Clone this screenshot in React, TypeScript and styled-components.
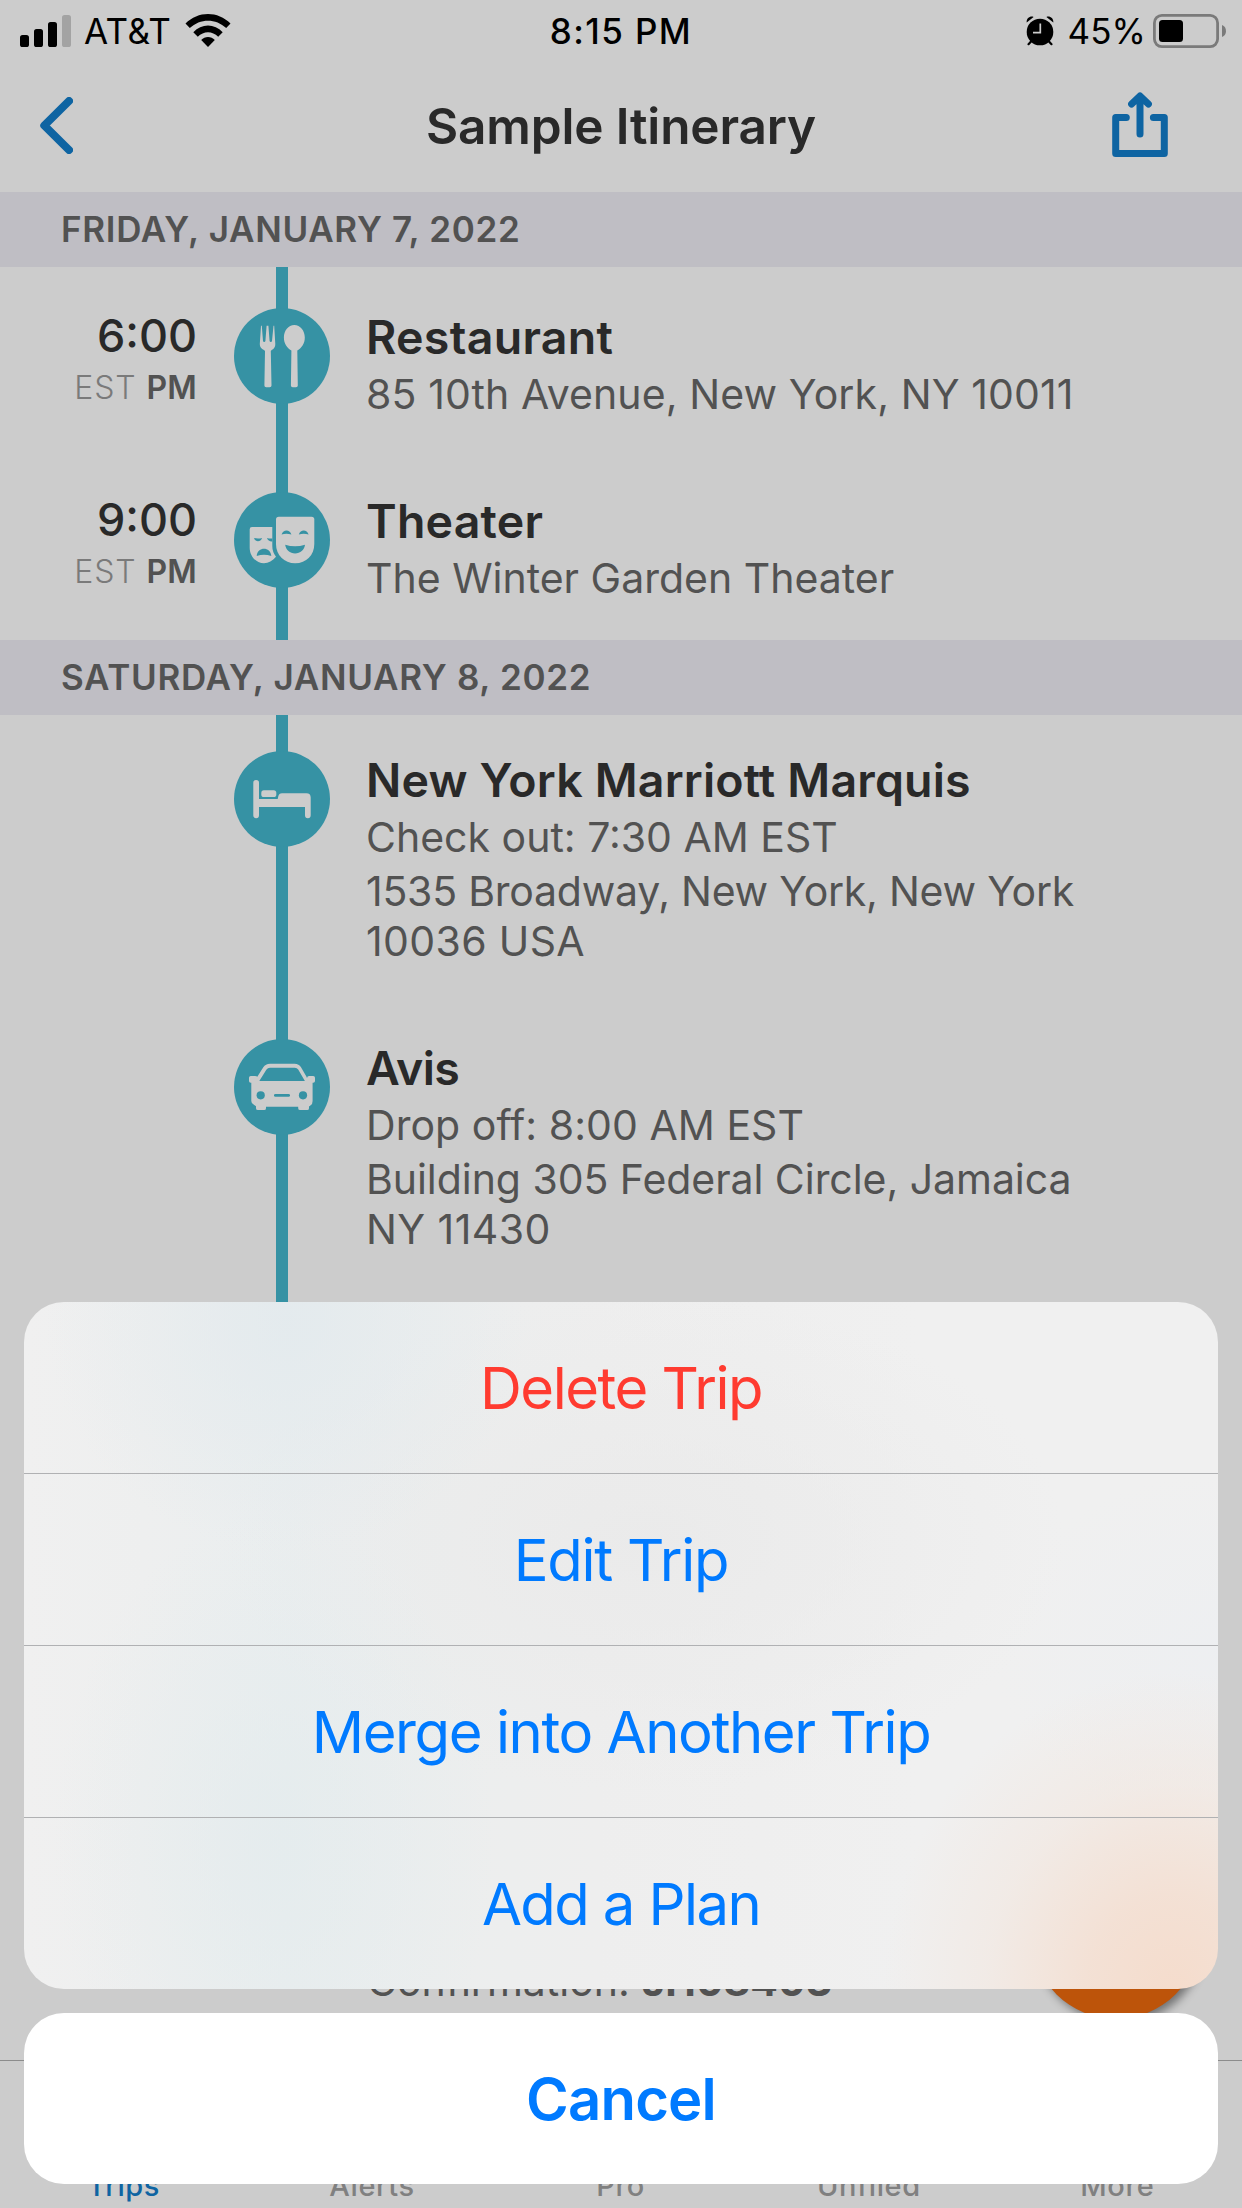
import React from "react";
import styled, { createGlobalStyle } from "styled-components";

const GlobalStyle = createGlobalStyle`
  * { box-sizing: border-box; }
  body { margin: 0; background: #cccccc; }
`;

const Screen = styled.div`
  position: relative;
  display: flex;
  flex-direction: column;
  width: 1242px;
  height: 2208px;
  overflow: hidden;
  background: #cccccc;
  font-family: Inter, "Liberation Sans", sans-serif;
  white-space: nowrap;
`;

const StatusBar = styled.header`
  display: grid;
  grid-template-columns: 1fr auto 1fr;
  align-items: center;
  height: 62px;
  padding: 0 16px 0 20px;
  color: #000;
  font-size: 35px;
  line-height: 62px;
`;

const StatusGroup = styled.div<{ $end?: boolean }>`
  display: flex;
  align-items: center;
  justify-content: ${(p) => (p.$end ? "flex-end" : "flex-start")};
  height: 62px;
`;

const Carrier = styled.span`
  margin: 0 14px 0 13px;
  letter-spacing: 0.4px;
`;

const Clock = styled.span`
  margin-right: 4px;
  font-weight: 500;
  letter-spacing: 1.4px;
`;

const BatteryLevel = styled.span`
  margin: 0 7px 0 13.5px;
  letter-spacing: 0.1px;
`;

const NavBar = styled.nav`
  display: grid;
  grid-template-columns: 1fr auto 1fr;
  align-items: center;
  height: 130px;
  padding: 0 74px 2px 40px;
  color: #0e64a2;
`;

const NavTitle = styled.h1`
  margin: 0 0 0 34px;
  color: #292929;
  font-size: 49.5px;
  font-weight: 600;
  line-height: 60px;
  letter-spacing: -0.15px;
`;

const NavAction = styled.div<{ $end?: boolean }>`
  display: flex;
  justify-content: ${(p) => (p.$end ? "flex-end" : "flex-start")};
  margin-bottom: ${(p) => (p.$end ? 3 : 1)}px;
`;

const DayHeader = styled.h2`
  flex: none;
  height: 75px;
  margin: 0;
  padding-left: 61px;
  background: #bfbec4;
  color: #525252;
  font-size: 35px;
  font-weight: 600;
  line-height: 75px;
  letter-spacing: 0.7px;
`;

const DayPlans = styled.section<{ $top: number; $bottom: number }>`
  flex: none;
  padding: ${(p) => p.$top}px 0 ${(p) => p.$bottom}px;
  background: linear-gradient(#3692a4, #3692a4) 276px 0 / 12px 100% no-repeat;
`;

const PlanRow = styled.article<{ $height: number }>`
  display: grid;
  grid-template-columns: 197px 96px 1fr;
  column-gap: 37px;
  align-items: start;
  height: ${(p) => p.$height}px;
  padding-top: 36px;
`;

const TimeColumn = styled.div`
  display: flex;
  flex-direction: column;
  align-items: flex-end;
  padding-top: 1px;
`;

const Time = styled.div`
  color: #292929;
  font-size: 45px;
  font-weight: 500;
  line-height: 54px;
`;

const Zone = styled.div`
  margin-top: 5px;
  color: #7a7a7a;
  font-size: 32px;
  font-weight: 300;
  line-height: 40px;
  letter-spacing: 0.9px;

  b {
    color: #525252;
    font-weight: 600;
    letter-spacing: 0.2px;
  }
`;

const Badge = styled.div`
  width: 96px;
  height: 96px;
  border-radius: 50%;
  background: #3692a4;
  color: #cccccc;
`;

const PlanText = styled.div`
  margin-left: -1px;
  padding-top: 1px;
`;

const PlanTitle = styled.h3<{ $spacing?: number }>`
  margin: 0;
  color: #292929;
  font-size: 46.5px;
  font-weight: 600;
  line-height: 56px;
  letter-spacing: ${(p) => p.$spacing ?? 0}px;
`;

const PlanDetail = styled.p<{ $tight?: boolean; $spacing?: number }>`
  margin: ${(p) => (p.$tight ? 0 : 4)}px 0 0;
  color: #525252;
  font-size: 41px;
  line-height: 50px;
  letter-spacing: ${(p) => p.$spacing ?? 0}px;
`;

const TrailingPlan = styled.section`
  flex: 1;
  display: flex;
  align-items: flex-end;
  padding: 0 0 54px 367px;
`;

const TabBar = styled.footer`
  flex: none;
  display: grid;
  grid-template-columns: repeat(5, 1fr);
  align-items: end;
  height: 148px;
  padding-bottom: 4px;
  border-top: 1px solid #8c8c8c;
`;

const Tab = styled.span<{ $active?: boolean }>`
  padding-right: 1px;
  color: ${(p) => (p.$active ? "#0e64a2" : "#808080")};
  font-size: 29px;
  font-weight: 500;
  line-height: 36px;
  text-align: center;
  letter-spacing: 0.6px;
`;

const AddButton = styled.div`
  position: absolute;
  left: 1032px;
  top: 1851px;
  width: 168px;
  height: 168px;
  border-radius: 50%;
  background: #bd540a;
  box-shadow: 4px 4px 10px rgba(0, 0, 0, 0.45);
`;

const ActionSheet = styled.div`
  position: absolute;
  left: 24px;
  right: 24px;
  bottom: 24px;
  display: flex;
  flex-direction: column;
  gap: 24px;
`;

const ActionGroup = styled.div`
  overflow: hidden;
  border-radius: 40px;
  background:
    radial-gradient(ellipse 290px 320px at 1150px 690px, #f5dccc 0%, rgba(244, 222, 208, 0.85) 30%, rgba(243, 228, 218, 0.45) 65%, rgba(241, 238, 236, 0) 100%),
    radial-gradient(ellipse 230px 180px at 1200px 350px, rgba(235, 238, 242, 0.55), rgba(236, 238, 242, 0)),
    radial-gradient(ellipse 240px 230px at 262px 20px, rgba(225, 233, 237, 0.7), rgba(230, 236, 238, 0)),
    radial-gradient(ellipse 220px 330px at 250px 540px, rgba(226, 235, 237, 0.65), rgba(230, 236, 238, 0)),
    radial-gradient(ellipse 420px 250px at 620px 240px, rgba(234, 234, 234, 0.9), rgba(236, 236, 236, 0)),
    linear-gradient(90deg, #f0f0f0 0%, #eeefef 10%, #eaeeef 22%, #eceeee 34%, #eeeeee 48%, #f0f0f0 75%, #f0f0f0 100%);
`;

const Action = styled.div<{ $danger?: boolean; $spacing: number }>`
  height: 171px;
  color: ${(p) => (p.$danger ? "#ff3b30" : "#007aff")};
  font-size: 58px;
  line-height: 172px;
  text-align: center;
  letter-spacing: ${(p) => p.$spacing}px;

  & + & {
    height: 172px;
    border-top: 1px solid #b0b1b3;
  }
`;

const CancelAction = styled.div`
  height: 171px;
  border-radius: 40px;
  background: #fff;
  color: #007aff;
  font-size: 58px;
  font-weight: 600;
  line-height: 172px;
  text-align: center;
  letter-spacing: -0.8px;
`;

const SignalIcon = () => (
  <svg width="51" height="33" viewBox="0 0 51 33">
    <rect x="0" y="20" width="9" height="12" rx="2.6" />
    <rect x="14" y="14" width="9" height="18" rx="2.6" />
    <rect x="28" y="7" width="9" height="25" rx="2.6" />
    <rect x="42" y="0" width="9" height="32" rx="2.6" fill="#a3a3a3" />
  </svg>
);

const WifiIcon = () => (
  <svg width="46" height="34" viewBox="0 0 46 34">
    <path d="M.5 9.6C13-3.2 33-3.2 45.500 9.600l-4.300 4.500C31 4.200 15 4.200 4.800 14.100z" />
    <path d="M8.300 18.200c8.300-9 21.100-9 29.400 0l-4.500 4.500c-5.900-6-14.500-6-20.400 0z" />
    <path d="M16.200 26c3.600-4 10-4 13.600 0L23 33z" />
  </svg>
);

const AlarmIcon = () => (
  <svg width="28" height="30" viewBox="0 0 28 30">
    <path d="M.7 6.500C.2 3 3.500-.4 7.600.9zM27.300 6.500C27.800 3 24.500-.4 20.400.9z" />
    <circle cx="14" cy="16" r="13.300" />
    <path d="M5.500 25l-3 3.200M22.500 25l3 3.200" stroke="#000" strokeWidth="2.200" strokeLinecap="round" />
    <path d="M14.300 7.500v9.200H7" fill="none" stroke="#cccccc" strokeWidth="1.700" />
  </svg>
);

const BatteryIcon = () => (
  <svg width="73" height="34" viewBox="0 0 73 34">
    <rect x="1.400" y="1.400" width="63.200" height="31.200" rx="7.500" fill="none" stroke="#7a7a7a" strokeWidth="2.800" />
    <rect x="6" y="6" width="24" height="22" rx="3.500" />
    <path d="M69 11c5.300 1.500 5.300 10.500 0 12z" fill="#7a7a7a" />
  </svg>
);

const BackIcon = () => (
  <svg width="33" height="57" viewBox="0 0 33 57" fill="none" stroke="currentColor" strokeWidth="8" strokeLinecap="round" strokeLinejoin="round">
    <path d="M29 4L4.300 28.500 29 53" />
  </svg>
);

const ShareIcon = () => (
  <svg width="56" height="65" viewBox="0 0 56 65" fill="none" stroke="currentColor" strokeWidth="7" strokeLinecap="round" strokeLinejoin="round">
    <path d="M14.300 25.500H3.700v36h48.600v-36H41.400" />
    <path d="M28 42V4.500M19.600 12L28 4l8.400 8" />
  </svg>
);

const RestaurantIcon = () => (
  <svg width="96" height="96" viewBox="0 0 96 96" fill="currentColor">
    <path d="M27 17.700h.8L29 33q.2 1 1.200 1t1.200-1L32.600 17.700h1.800L35.600 33q.2 1 1.200 1T38 33L39.500 17.700h.7L41.300 36q.1 4-3.600 6L36.800 43l.7 34.500q0 1.700-1.800 1.700h-3.500q-1.800 0-1.800-1.700L31 43l-1-1q-4.300-2-4.200-6z" />
    <path d="M60.300 17c6 0 10.500 5.700 10.500 12.500 0 6-3 10.500-7.500 12.900l.5 35.100q0 1.700-1.800 1.700h-3.300q-1.800 0-1.800-1.700l.5-35.100c-4.500-2.400-7.500-6.900-7.500-12.900C49.900 22.700 54.300 17 60.300 17z" />
  </svg>
);

const TheaterIcon = () => (
  <svg width="96" height="96" viewBox="0 0 96 96" fill="currentColor">
    <path d="M18 35h20.300v19q0 6 3.700 10.800C38.500 69 34.500 71.300 30 71.300 22 71.300 15.700 64 15.700 56V37.300Q15.700 35 18 35z" />
    <path d="M44.800 24.700h32.700q2.800 0 2.800 2.800V52c0 11-8 19.300-19.100 19.300S42 63 42 52V27.500q0-2.800 2.800-2.800z" />
    <g fill="#3692a4">
      <path d="M47.600 42.400c1.600-5.300 8.200-5.300 9.800 0q-5-1.300-9.800 0zM64.800 42.400c1.600-5.300 8.200-5.300 9.800 0q-5-1.300-9.800 0z" />
      <path d="M51.200 52.700q9.900 3 19.800 0c-.5 5.200-4.800 8.700-9.900 8.700s-9.400-3.500-9.900-8.700z" />
      <path d="M19.900 46q4 1 8.200 0c-1.600 4.400-6.600 4.400-8.200 0zM33 46q3 .8 5.300.4v3c-2.300.3-4.600-1-5.300-3.400z" />
      <path d="M22.700 64c.8-9.600 13.800-9.600 14.600 0q-7.300-2.600-14.600 0z" />
    </g>
  </svg>
);

const BedIcon = () => (
  <svg width="96" height="96" viewBox="0 0 96 96" fill="currentColor">
    <path d="M22.200 29a2.800 2.800 0 0 1 2.800 2.800V48h18.700l.6-2.800q.6-2.900 3.700-2.900h24.400q4.300 0 4.300 4.300v17.700a2.850 2.850 0 0 1-5.700 0V56H25v8.300a2.850 2.850 0 0 1-5.700 0V31.800A2.800 2.800 0 0 1 22.200 29z" />
    <rect x="27.300" y="39.300" width="15" height="6.700" rx="2.600" />
  </svg>
);

const CarIcon = () => (
  <svg width="96" height="96" viewBox="0 0 96 96" fill="currentColor">
    <path
      fillRule="evenodd"
      d="M36 24.700h24.500q4.500 0 6.500 3.500l5.500 9.500h0L73 39q.3-2 2-2h4.200q1.800 0 1.800 1.800v3.200q0 1.800-1.800 1.800h-.6V62q0 3-1.900 4.200l-1.700 1.300v1.700q0 1.900-1.900 1.900h-7q-1.900 0-1.900-1.900v-1.500H32v1.500q0 1.900-1.900 1.900h-6.200q-1.900 0-1.900-1.900v-2l-2.400-1.700Q17.300 64 17.300 62V43.800h-.6q-1.700 0-1.700-1.800v-3.200Q15 37 16.800 37H21q1.800 0 2.300.8l6-9.600q2.200-3.500 6.700-3.500zM36 28.700q-2.300 0-3.500 1.800L25.300 42h45.600l-6.700-11.500q-1.200-1.800-3.400-1.800z"
    />
    <g fill="#3692a4">
      <circle cx="26.700" cy="56.300" r="4.100" />
      <circle cx="69" cy="56.300" r="4.100" />
      <rect x="40" y="54.900" width="16" height="2.900" rx="1.400" />
    </g>
  </svg>
);

interface Line {
  text: string;
  spacing?: number;
  tight?: boolean;
}

interface Plan {
  title: string;
  titleSpacing?: number;
  time?: string;
  icon: React.ReactNode;
  lines: Line[];
  height: number;
}

const friday: Plan[] = [
  {
    title: "Restaurant",
    titleSpacing: 0.3,
    time: "6:00",
    icon: <RestaurantIcon />,
    height: 184,
    lines: [{ text: "85 10th Avenue, New York, NY 10011", spacing: 0.11 }],
  },
  {
    title: "Theater",
    titleSpacing: 0.2,
    time: "9:00",
    icon: <TheaterIcon />,
    height: 184,
    lines: [{ text: "The Winter Garden Theater" }],
  },
];

const saturday: Plan[] = [
  {
    title: "New York Marriott Marquis",
    titleSpacing: 0.18,
    icon: <BedIcon />,
    height: 288,
    lines: [
      { text: "Check out: 7:30 AM EST" },
      { text: "1535 Broadway, New York, New York", spacing: -0.24 },
      { text: "10036 USA", spacing: 0.35, tight: true },
    ],
  },
  {
    title: "Avis",
    titleSpacing: -0.6,
    icon: <CarIcon />,
    height: 288,
    lines: [
      { text: "Drop off: 8:00 AM EST", spacing: 0.05 },
      { text: "Building 305 Federal Circle, Jamaica", spacing: -0.05 },
      { text: "NY 11430", spacing: 0.45, tight: true },
    ],
  },
];

const PlanItem = ({ plan }: { plan: Plan }) => (
  <PlanRow $height={plan.height}>
    <TimeColumn>
      {plan.time && (
        <>
          <Time>{plan.time}</Time>
          <Zone>
            EST <b>PM</b>
          </Zone>
        </>
      )}
    </TimeColumn>
    <Badge>{plan.icon}</Badge>
    <PlanText>
      <PlanTitle $spacing={plan.titleSpacing}>{plan.title}</PlanTitle>
      {plan.lines.map((line) => (
        <PlanDetail key={line.text} $tight={line.tight} $spacing={line.spacing}>
          {line.text}
        </PlanDetail>
      ))}
    </PlanText>
  </PlanRow>
);

export default function App() {
  return (
    <>
      <GlobalStyle />
      <Screen>
        <StatusBar>
          <StatusGroup>
            <SignalIcon />
            <Carrier>AT&amp;T</Carrier>
            <WifiIcon />
          </StatusGroup>
          <Clock>8:15 PM</Clock>
          <StatusGroup $end>
            <AlarmIcon />
            <BatteryLevel>45%</BatteryLevel>
            <BatteryIcon />
          </StatusGroup>
        </StatusBar>
        <NavBar>
          <NavAction>
            <BackIcon />
          </NavAction>
          <NavTitle>Sample Itinerary</NavTitle>
          <NavAction $end>
            <ShareIcon />
          </NavAction>
        </NavBar>
        <DayHeader>FRIDAY, JANUARY 7, 2022</DayHeader>
        <DayPlans $top={5} $bottom={0}>
          {friday.map((plan) => (
            <PlanItem key={plan.title} plan={plan} />
          ))}
        </DayPlans>
        <DayHeader>SATURDAY, JANUARY 8, 2022</DayHeader>
        <DayPlans $top={0} $bottom={60}>
          {saturday.map((plan) => (
            <PlanItem key={plan.title} plan={plan} />
          ))}
        </DayPlans>
        <TrailingPlan>
          <PlanDetail>
            Confirmation: <b>JH08403</b>
          </PlanDetail>
        </TrailingPlan>
        <TabBar>
          <Tab $active>Trips</Tab>
          <Tab>Alerts</Tab>
          <Tab>Pro</Tab>
          <Tab>Unfiled</Tab>
          <Tab>More</Tab>
        </TabBar>
        <AddButton />
        <ActionSheet>
          <ActionGroup>
            <Action $danger $spacing={-1.5}>Delete Trip</Action>
            <Action $spacing={-1.3}>Edit Trip</Action>
            <Action $spacing={-1.43}>Merge into Another Trip</Action>
            <Action $spacing={-1.6}>Add a Plan</Action>
          </ActionGroup>
          <CancelAction>Cancel</CancelAction>
        </ActionSheet>
      </Screen>
    </>
  );
}
